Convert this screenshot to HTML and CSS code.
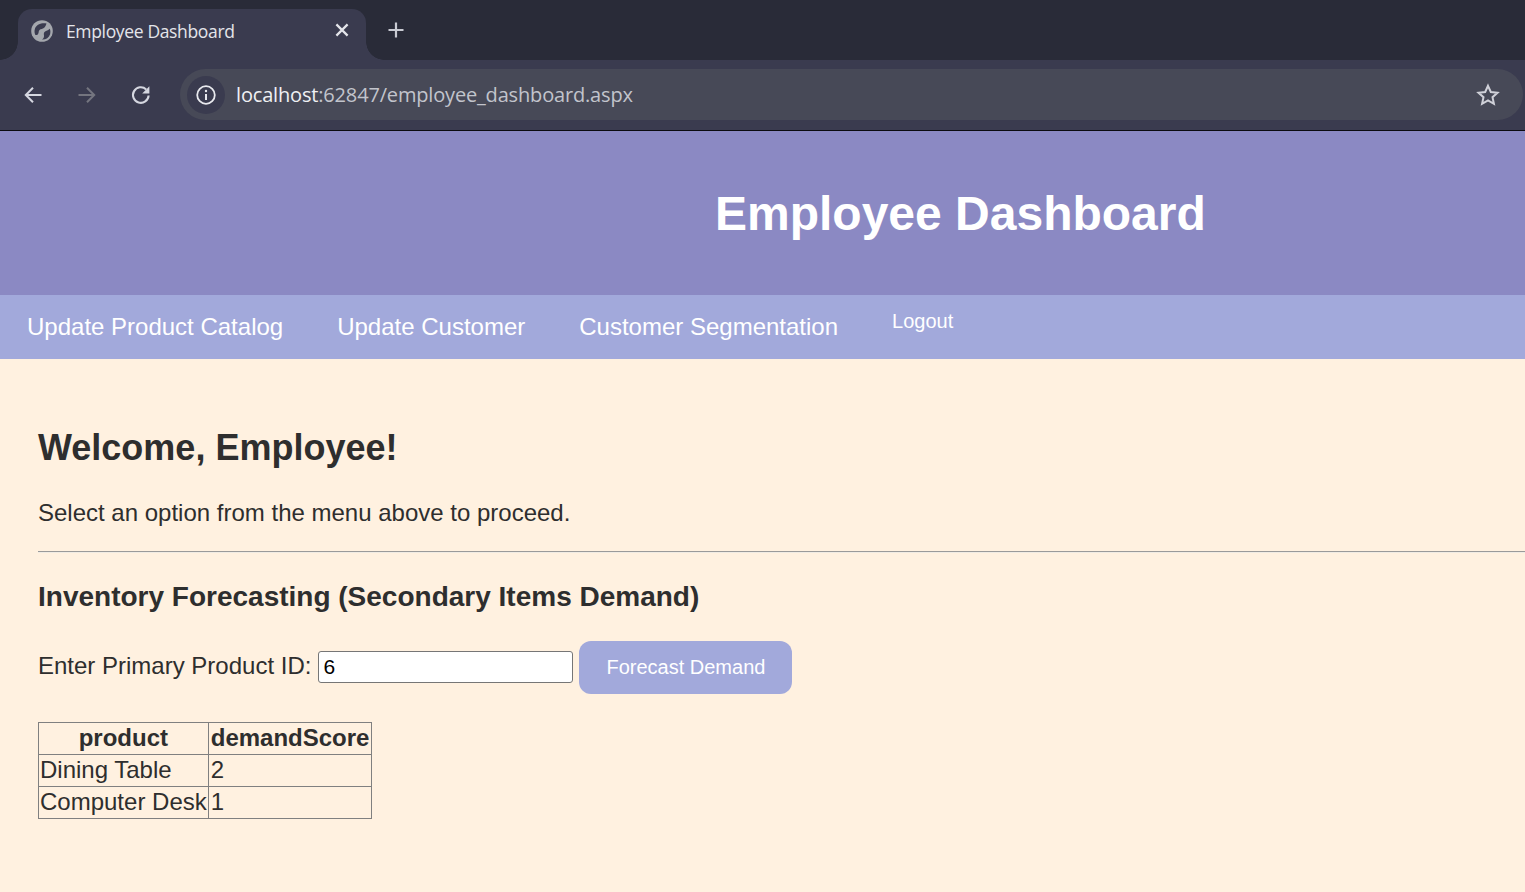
FILE: index.html
```html
<!DOCTYPE html>
<html lang="en">
<head>
<meta charset="utf-8">
<title>Employee Dashboard</title>
<link rel="stylesheet" href="styles.css">
</head>
<body>
<div class="browser">
  <div class="tabstrip">
    <div class="tab">
      <svg class="favicon" viewBox="0 0 22 22"><circle cx="11" cy="11" r="10.8" fill="#a4a7ad"/><path d="M15.5 3.600C11 2.600 5.600 4.400 4 8.600c-.8 2.400-.6 4.600.4 6.400 1.800.2 3-.8 3.200-2.600.2-2 1.200-3.200 3.200-3.400 2.400-.3 3.900-2.300 4.700-5.400zM18.800 8.800c-1.600 1.400-3.600 2-5 3-1.200 1-1 2.400-.8 3.600.2 1.400-.4 3-2 4.200 3.800.2 7-1.800 8-5 .6-2 .5-4.200-.2-5.800z" fill="#3a3b4f"/></svg>
      <span class="tab-title">Employee Dashboard</span>
      <svg class="tab-close" viewBox="0 0 12 12"><path d="M1.200 1.200l9.600 9.600M10.800 1.200l-9.600 9.600" stroke="#e4e5ea" stroke-width="1.900" fill="none"/></svg>
    </div>
    <svg class="newtab" viewBox="0 0 16 16"><path d="M8 .5v15M.5 8h15" stroke="#c9cbd3" stroke-width="2.200" fill="none"/></svg>
  </div>
  <div class="toolbar">
    <svg class="navicon" viewBox="0 0 20 20"><path d="M18.500 10H3M10 2.800L2.800 10l7.200 7.200" stroke="#d5d7e0" stroke-width="2" fill="none"/></svg>
    <svg class="navicon" viewBox="0 0 20 20"><path d="M1.500 10H17M10 2.800l7.200 7.200-7.200 7.200" stroke="#74757f" stroke-width="2" fill="none"/></svg>
    <svg class="navicon" viewBox="0 0 20 20"><path d="M17.600 10.500a7.800 7.800 0 1 1-2.400-6.100" stroke="#d5d7e0" stroke-width="2.100" fill="none"/><path d="M18.400 1.200v7.200h-7.200z" fill="#d5d7e0"/></svg>
    <div class="omnibox">
      <div class="info-chip">
        <svg class="info" viewBox="0 0 20 20"><circle cx="10" cy="10" r="8.800" stroke="#e8e9ee" stroke-width="1.800" fill="none"/><path d="M10 9v6" stroke="#e8e9ee" stroke-width="2"/><circle cx="10" cy="6" r="1.200" fill="#e8e9ee"/></svg>
      </div>
      <div class="url"><span class="url-host">localhost</span>:62847/employee_dashboard.aspx</div>
      <svg class="star" viewBox="0 0 24 24"><path d="M12 2.800l2.800 6.200 6.700.7-5 4.500 1.400 6.600-5.900-3.400-5.900 3.400 1.400-6.600-5-4.500 6.700-.7z" stroke="#d0d1d9" stroke-width="2" fill="none"/></svg>
    </div>
  </div>
</div>
<header class="page-header"><h1>Employee Dashboard</h1></header>
<nav class="menu">
  <a class="menu-link" href="#">Update Product Catalog</a>
  <a class="menu-link" href="#">Update Customer</a>
  <a class="menu-link" href="#">Customer Segmentation</a>
  <a class="menu-link logout" href="#">Logout</a>
</nav>
<main class="content">
  <h2>Welcome, Employee!</h2>
  <p class="lead">Select an option from the menu above to proceed.</p>
  <hr class="rule">
  <h3>Inventory Forecasting (Secondary Items Demand)</h3>
  <div class="form-row">
    <label class="id-label" for="pid">Enter Primary Product ID:</label>
    <input class="id-input" id="pid" type="text" value="6">
    <button class="forecast" type="button">Forecast Demand</button>
  </div>
  <table class="results">
    <tr><th>product</th><th>demandScore</th></tr>
    <tr><td>Dining Table</td><td>2</td></tr>
    <tr><td>Computer Desk</td><td>1</td></tr>
  </table>
</main>
</body>
</html>
```
FILE: styles.css
```css
* { box-sizing: border-box; }
html, body { margin: 0; padding: 0; height: 100%; overflow: hidden; }
body { background: #fff1e0; font-family: "Liberation Sans", Arial, sans-serif; color: #2e2e2e; }

.browser { height: 131px; background: #3a3b4f; border-bottom: 1px solid #0b0b10; font-family: "Open Sans", "Noto Sans", sans-serif; }
.tabstrip { height: 60px; background: #292b38; display: flex; align-items: flex-start; padding: 9px 0 0 18px; }
.tab { width: 348px; height: 51px; background: #3a3b4f; border-radius: 14px 14px 0 0; display: flex; align-items: center; padding: 0 17px 7px 13px; position: relative; }
.tab::before, .tab::after { content: ""; position: absolute; bottom: 0; width: 18px; height: 18px; }
.tab::before { left: -18px; background: radial-gradient(circle at 0 0, #292b38 17.5px, #3a3b4f 18px); }
.tab::after { right: -18px; background: radial-gradient(circle at 100% 0, #292b38 17.5px, #3a3b4f 18px); }
.favicon { width: 22px; height: 22px; flex: none; }
.tab-title { color: #e4e5ea; font-size: 17.5px; margin-left: 13px; flex: 1; letter-spacing: -0.35px; }
.tab-close { width: 14px; height: 14px; flex: none; margin-top: -3px; }
.newtab { width: 16px; height: 16px; margin: 13px 0 0 22px; }
.toolbar { height: 70px; display: flex; align-items: center; padding: 0 2px 0 23px; }
.navicon { width: 20px; height: 20px; flex: none; margin-right: 34px; }
.omnibox { flex: 1; height: 51px; margin: -1px 0 0 -5px; background: #474957; border-radius: 26px; display: flex; align-items: center; padding: 0 23px 0 7px; }
.info-chip { width: 38px; height: 38px; border-radius: 50%; background: #3a3b4f; display: flex; align-items: center; justify-content: center; flex: none; }
.info { width: 20px; height: 20px; }
.url { flex: 1; margin-left: 11px; color: #c2c4cc; font-size: 20px; letter-spacing: -0.17px; white-space: nowrap; }
.url-host { color: #eff0f3; }
.star { width: 24px; height: 24px; flex: none; }

.page-header { height: 164px; background: #8b89c3; display: flex; align-items: center; padding-left: 715px; }
.page-header h1 { margin: 0; color: #fff; font-size: 48px; font-weight: 700; }
.menu { height: 64px; background: #a2a9db; display: flex; align-items: flex-start; gap: 54px; padding-left: 27px; }
.menu-link { color: #fff; text-decoration: none; font-size: 24px; line-height: 28px; margin-top: 18px; }
.logout { font-size: 20px; line-height: 24px; margin-top: 14px; }

.content { padding: 0 0 0 38px; }
.content h2 { margin: 68px 0 0; font-size: 36px; line-height: 41px; font-weight: 700; }
.lead { margin: 31px 0 0; font-size: 24px; line-height: 28px; }
.rule { margin: 24px 0 0; border: 0; border-top: 1px solid #9a9a9a; border-bottom: 1px solid #f1ece4; height: 2px; }
.content h3 { margin: 28px 0 0; font-size: 28px; line-height: 32px; font-weight: 700; }
.form-row { display: flex; align-items: center; margin-top: 28px; }
.id-label { font-size: 24px; margin-bottom: 4px; }
.id-input { width: 255px; height: 32px; margin: 0 0 2px 7px; border: 1px solid #767676; border-radius: 3px; background: #fff; padding: 1px 4px; font: 21px "Liberation Sans", Arial, sans-serif; color: #000; }
.forecast { width: 213px; height: 53px; margin-left: 6px; border: 0; border-radius: 12px; background: #a2a9db; color: #fff; font: 20px "Liberation Sans", Arial, sans-serif; padding-bottom: 2px; }
.results { margin-top: 28px; border-collapse: collapse; font-size: 24px; }
.results th, .results td { border: 1px solid #808080; padding: 0 1px 2px; line-height: 29px; }
.results th:nth-child(2), .results td:nth-child(2) { padding-left: 2px; padding-right: 2px; }
.results td { font-weight: 400; }
.results tr { height: 32px; }
```
